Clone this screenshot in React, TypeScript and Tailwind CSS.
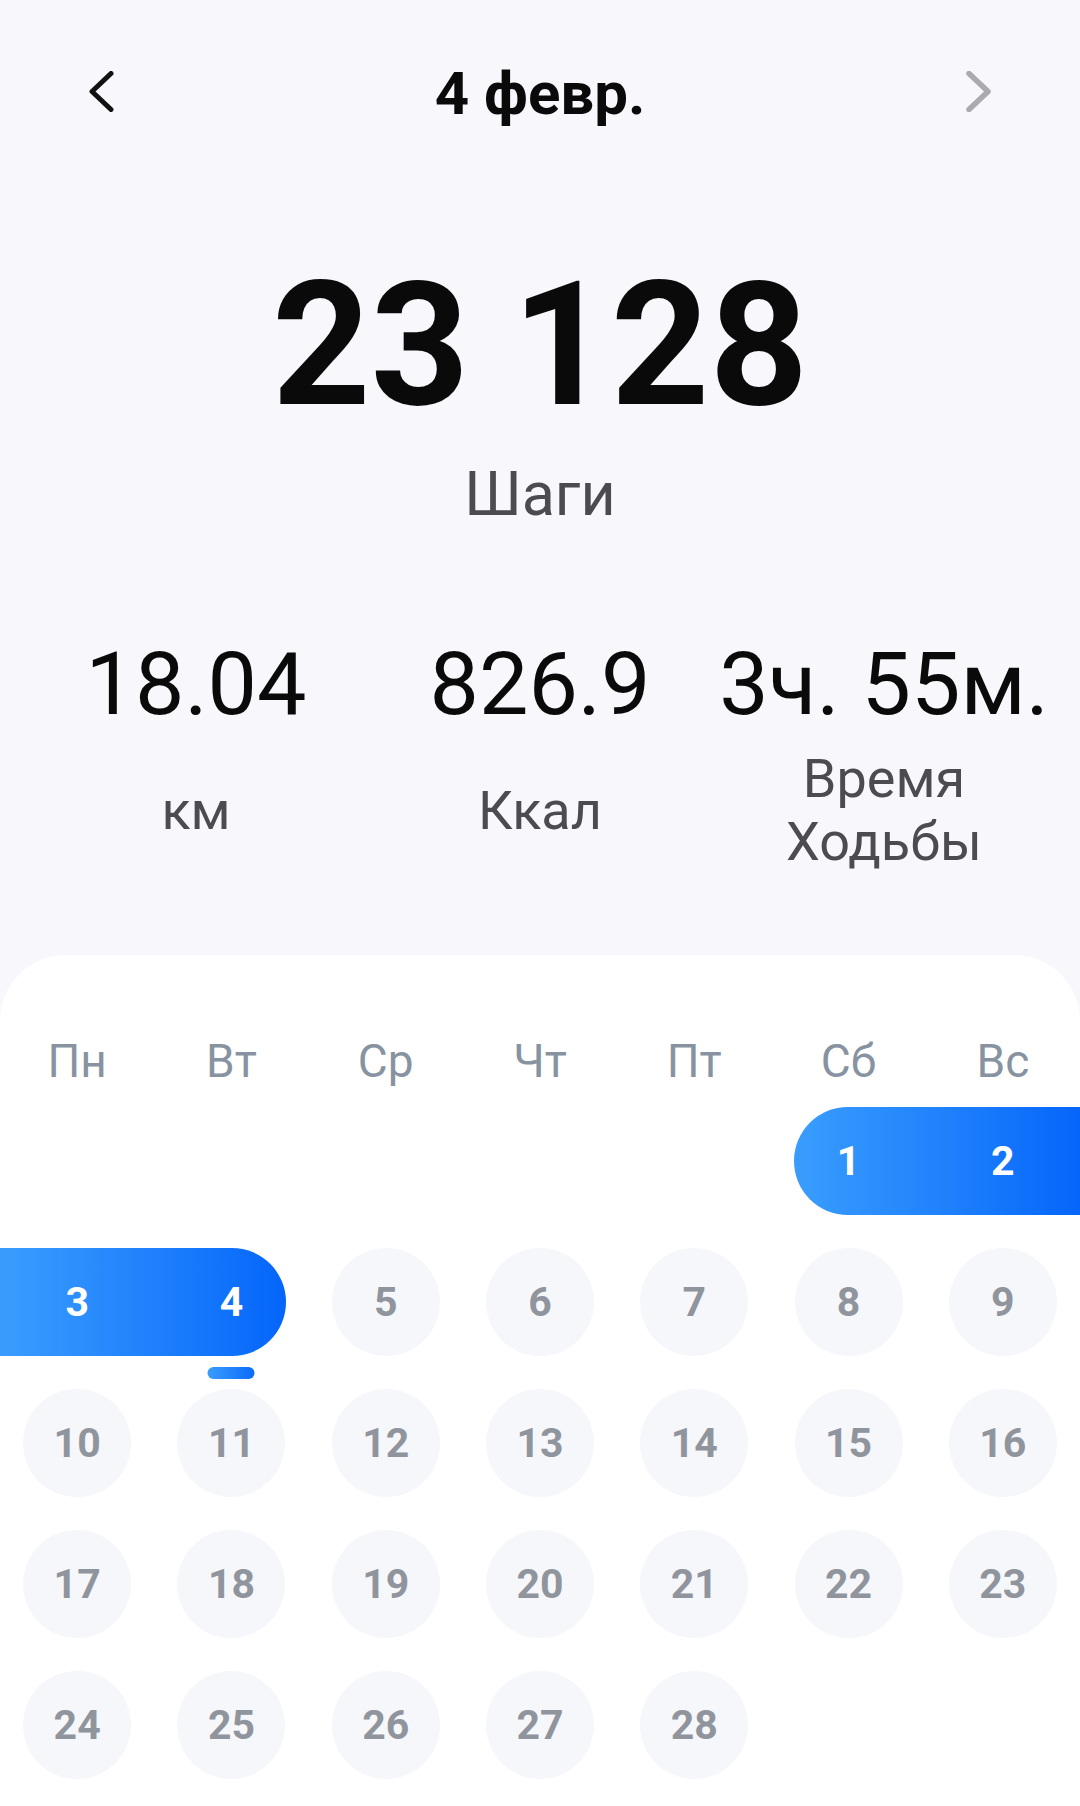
import React from "react";

const colStart = [
  "col-start-1",
  "col-start-2",
  "col-start-3",
  "col-start-4",
  "col-start-5",
  "col-start-6",
  "col-start-7",
];

type Week = {
  days: (number | null)[];
  pill?: string;
  indicator?: number;
};

const weeks: Week[] = [
  {
    days: [null, null, null, null, null, 1, 2],
    pill: "col-start-6 col-span-2 ml-[23px] rounded-l-full rounded-r-[14px]",
  },
  {
    days: [3, 4, 5, 6, 7, 8, 9],
    pill: "col-start-1 col-span-2 mr-[23px] rounded-r-full rounded-l-[14px]",
    indicator: 4,
  },
  { days: [10, 11, 12, 13, 14, 15, 16] },
  { days: [17, 18, 19, 20, 21, 22, 23] },
  { days: [24, 25, 26, 27, 28, null, null] },
];

const selected = new Set([1, 2, 3, 4]);

const weekdays = ["Пн", "Вт", "Ср", "Чт", "Пт", "Сб", "Вс"];

function ChevronLeft() {
  return (
    <svg width="28" height="41" viewBox="0 0 28 41" className="mt-[7px] shrink-0">
      <polyline
        points="23,2.5 4,20.5 23,38.5"
        fill="none"
        stroke="#111111"
        strokeWidth="5"
        strokeLinecap="round"
        strokeLinejoin="round"
      />
    </svg>
  );
}

function ChevronRight() {
  return (
    <svg width="28" height="41" viewBox="0 0 28 41" className="mt-[7px] shrink-0">
      <polyline
        points="5,2.5 24,20.5 5,38.5"
        fill="none"
        stroke="#aaaaaf"
        strokeWidth="5.5"
        strokeLinecap="round"
        strokeLinejoin="round"
      />
    </svg>
  );
}

export default function App() {
  return (
    <div className="min-h-[1806px] w-[1080px] bg-[#f8f8fc] flex flex-col font-['Roboto','Noto_Sans',sans-serif] overflow-hidden">
      {/* Header */}
      <div className="mt-[64px] flex items-start justify-between px-[88px]">
        <ChevronLeft />
        <div className="text-[60px] font-bold leading-none text-[#0a0a0a]">4 февр.</div>
        <ChevronRight />
      </div>

      {/* Steps */}
      <div className="mt-[135px] flex flex-col items-center">
        <div className="text-[172px] font-bold leading-none text-[#0a0a0a] tracking-[0px]">23 128</div>
        <div className="mt-[33px] text-[61px] leading-none text-[#4b4b50]">Шаги</div>
      </div>

      {/* Stats */}
      <div className="mt-[115px] px-[24px] grid grid-cols-3">
        <div className="flex flex-col items-center">
          <div className="text-[88px] leading-none text-[#0a0a0a]">18.04</div>
        </div>
        <div className="flex flex-col items-center">
          <div className="text-[88px] leading-none text-[#0a0a0a]">826.9</div>
        </div>
        <div className="flex flex-col items-center">
          <div className="text-[88px] leading-none text-[#0a0a0a] whitespace-nowrap">3ч. 55м.</div>
        </div>
      </div>
      <div className="mt-[19px] px-[24px] grid grid-cols-3 h-[126px]">
        <div className="flex items-center justify-center text-center text-[54px] leading-[63px] text-[#4b4b50]">км</div>
        <div className="flex items-center justify-center text-center text-[54px] leading-[63px] text-[#4b4b50]">Ккал</div>
        <div className="flex items-center justify-center text-center text-[54px] leading-[63px] text-[#4b4b50]">
          <span>
            Время
            <br />
            Ходьбы
          </span>
        </div>
      </div>

      {/* Calendar card */}
      <div className="mt-[82px] flex-1 bg-white rounded-t-[66px] pt-[83px]">
        <div className="grid grid-cols-7">
          {weekdays.map((w) => (
            <div key={w} className="text-center text-[46px] leading-none text-[#8893a2]">
              {w}
            </div>
          ))}
        </div>

        <div className="mt-[23px] flex flex-col gap-y-[33px]">
          {weeks.map((week, wi) => (
            <div key={wi} className="grid grid-cols-7 grid-rows-1 h-[108px]">
              {week.pill && (
                <div
                  className={`row-start-1 ${week.pill} bg-linear-to-r from-[#3a9dfd] to-[#0565fa]`}
                />
              )}
              {week.days.map((d, di) =>
                d === null ? null : (
                  <div
                    key={di}
                    className={`row-start-1 ${colStart[di]} relative flex items-center justify-center`}
                  >
                    {selected.has(d) ? (
                      <span className="text-[41px] font-bold leading-none text-white">{d}</span>
                    ) : (
                      <div className="w-[108px] h-[108px] rounded-full bg-[#f6f7fb] flex items-center justify-center">
                        <span className="text-[41px] font-bold leading-none text-[#90959d]">{d}</span>
                      </div>
                    )}
                    {week.indicator === d && (
                      <div className="absolute top-[119px] left-1/2 -translate-x-1/2 w-[47px] h-[12px] rounded-full bg-linear-to-r from-[#3a9dfd] to-[#0a6afa]" />
                    )}
                  </div>
                )
              )}
            </div>
          ))}
        </div>
      </div>
    </div>
  );
}
